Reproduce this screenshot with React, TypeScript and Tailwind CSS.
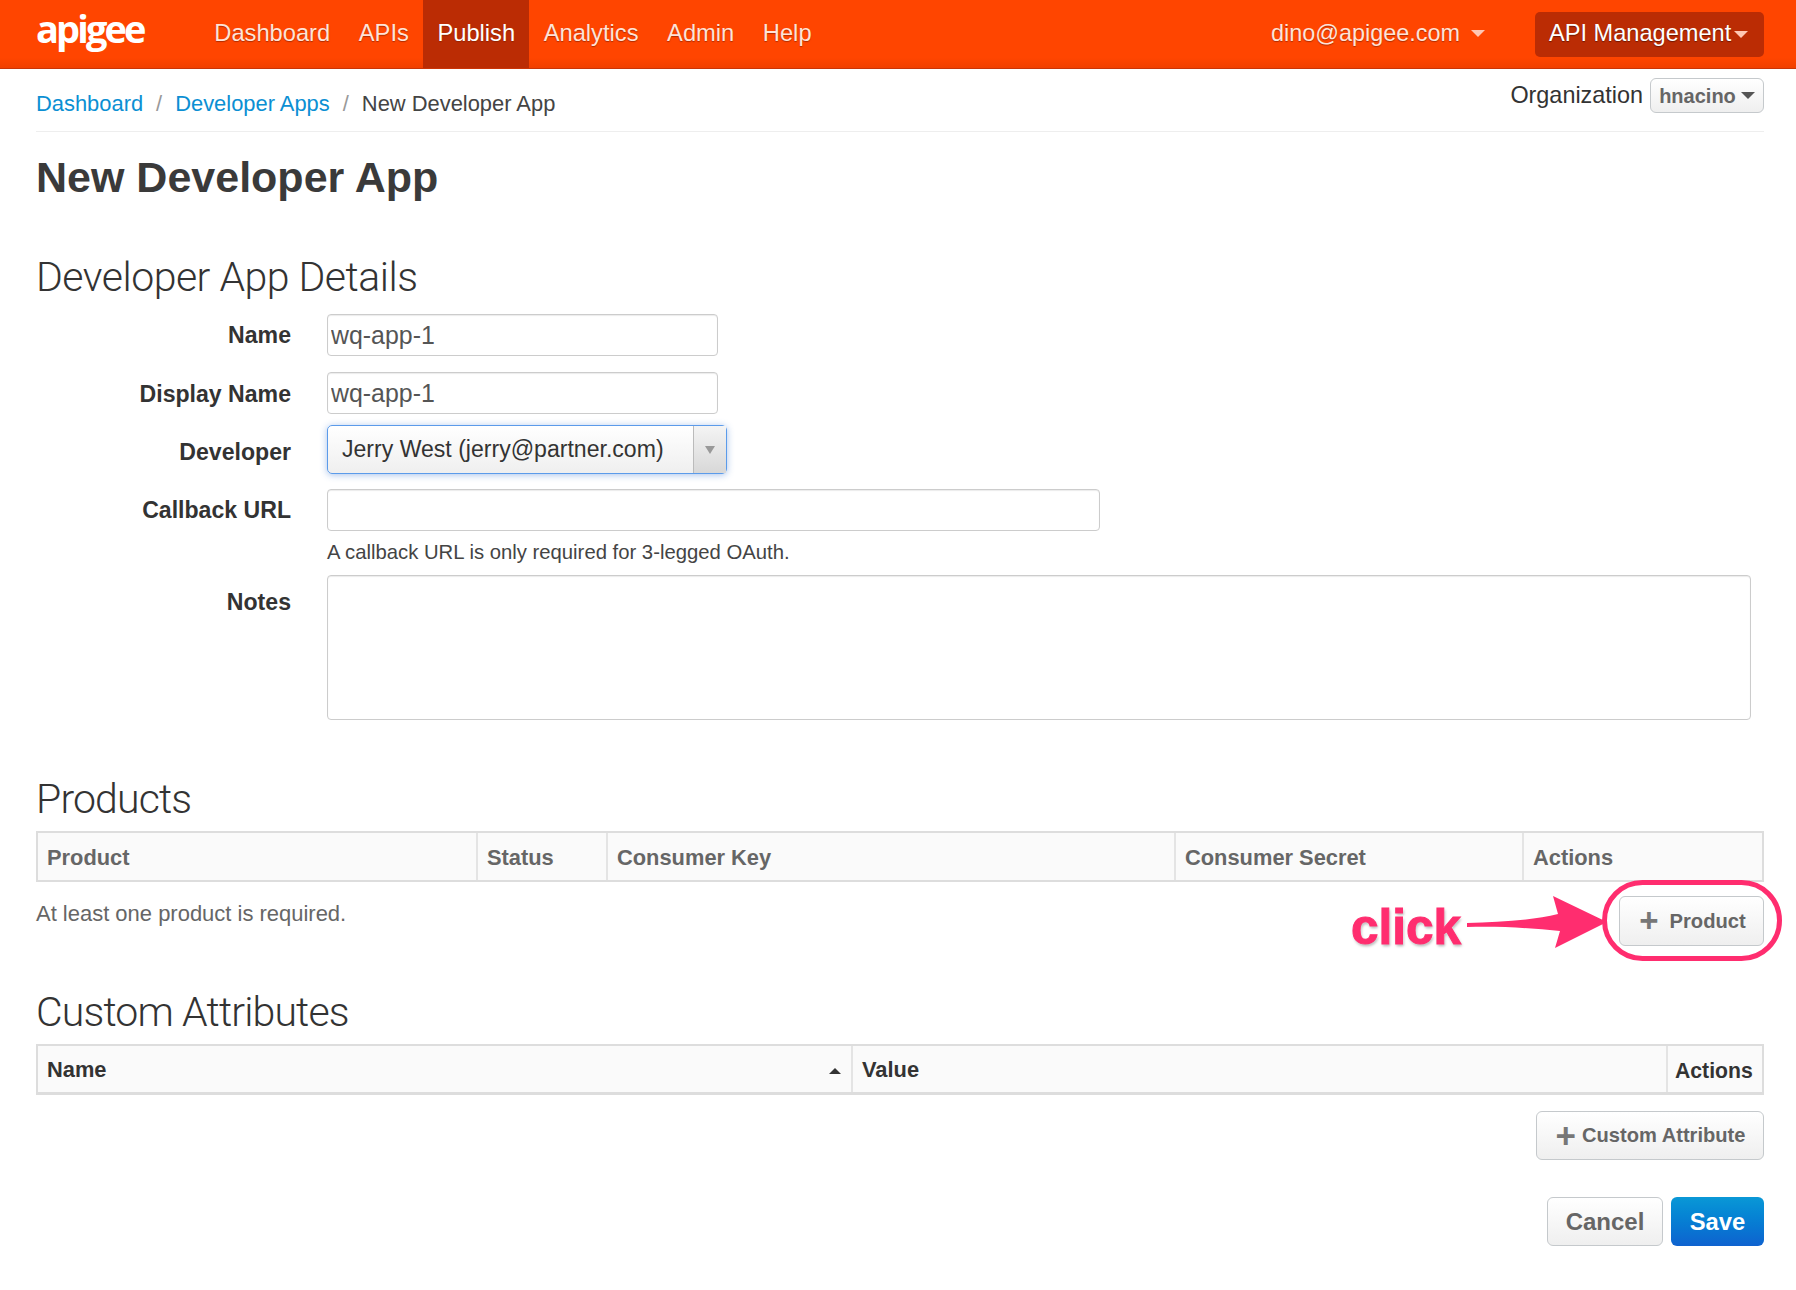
import React from "react";

function Caret({ className }: { className: string }) {
  return <span className={`inline-block h-0 w-0 border-x-[7px] border-t-[7px] border-x-transparent ${className}`} />;
}

function NavLink({ label, active }: { label: string; active?: boolean }) {
  return (
    <a className={`flex h-full items-center px-[14.3px] pb-[1px] [text-shadow:0_1px_1px_rgba(120,30,0,0.6)] ${active ? "bg-[#bb2c04] text-white" : "text-[#ffe3d8]"}`}>
      {label}
    </a>
  );
}

function Label({ children, className = "" }: { children: React.ReactNode; className?: string }) {
  return <label className={`w-[255px] pr-0 text-right text-[23.1px] font-bold leading-[28px] text-[#333] ${className}`}>{children}</label>;
}

const inputCls = "h-[42px] rounded-[4px] border border-[#ccc] bg-white px-[3px] text-[24.9px] text-[#555] shadow-[inset_0_1px_1px_rgba(0,0,0,0.08)] outline-none";
const h2Cls = "font-['Roboto'] text-[41px] font-light leading-[44px] text-[#333]";
const btnCls = "flex items-center justify-center rounded-[6px] border border-[#c5c9cc] bg-linear-to-b from-white to-[#efefef] font-bold text-[#666]";
const thCls = "flex items-center border-r-2 border-[#e4e4e4] pl-[9px] pt-[3px]";

export default function App() {
  return (
    <div className="relative min-h-[1290px] bg-white font-['Liberation_Sans',sans-serif] text-[#333]">
      <header className="flex h-[69px] items-center border-b border-[#c93508] bg-linear-to-b from-[#ff4500] from-85% to-[#f04000] pl-[36px] pr-[32px] text-[23.7px]">
        <span className="mb-[12px] w-[150px] font-['Open_Sans'] text-[38px] font-bold leading-[44px] tracking-[-2.9px] text-white">apigee</span>
        <nav className="ml-[14px] flex h-full">
          <NavLink label="Dashboard" />
          <NavLink label="APIs" />
          <NavLink label="Publish" active />
          <NavLink label="Analytics" />
          <NavLink label="Admin" />
          <NavLink label="Help" />
        </nav>
        <div className="ml-auto flex items-center text-[23.4px] text-[#ffe3d8] [text-shadow:0_1px_1px_rgba(120,30,0,0.6)]">
          dino@apigee.com
          <Caret className="ml-[11px] border-t-[#ffc7b3]" />
        </div>
        <div className="ml-[50px] flex h-[45px] w-[229px] items-center rounded-[5px] bg-[#bb2c04] pl-[14px] text-[23.6px] text-white [text-shadow:0_1px_1px_rgba(60,10,0,0.6)]">
          API Management
          <Caret className="ml-[3px] border-t-[#ffc7b3]" />
        </div>
      </header>

      <main className="pl-[36px] pr-[32px]">
        <div className="flex h-[63px] justify-between border-b border-[#eee]">
          <div className="flex items-center pt-[8px] text-[21.9px]">
            <a className="text-[#0b8fd3]">Dashboard</a>
            <span className="mx-[13px] text-[#999]">/</span>
            <a className="text-[#0b8fd3]">Developer Apps</a>
            <span className="mx-[13px] text-[#999]">/</span>
            <span className="text-[#444]">New Developer App</span>
          </div>
          <div className="flex h-[44px] items-center pt-[9px]">
            <span className="mr-[7px] text-[23.4px]">Organization</span>
            <button className={`${btnCls} h-[35px] w-[114px] gap-[5px] rounded-[5px] text-[20px]`}>
              hnacino
              <Caret className="border-t-[#555]" />
            </button>
          </div>
        </div>

        <h1 className="mt-[20px] text-[43px] font-bold leading-[50px] text-[#3a3a3a]">New Developer App</h1>

        <h2 className={`mt-[53px] tracking-[-0.5px] ${h2Cls}`}>Developer App Details</h2>

        <form className="mt-[15px] flex flex-col">
          <div className="flex items-center">
            <Label>Name</Label>
            <input className={`ml-[36px] w-[391px] ${inputCls}`} defaultValue="wq-app-1" />
          </div>
          <div className="mt-[16px] flex items-center">
            <Label className="pt-[1px]">Display Name</Label>
            <input className={`ml-[36px] w-[391px] ${inputCls}`} defaultValue="wq-app-1" />
          </div>
          <div className="mt-[11px] flex items-center">
            <Label className="pt-[5px]">Developer</Label>
            <div className="ml-[36px] flex h-[49px] w-[400px] items-center rounded-[5px] border border-[#5b9bea] bg-linear-to-b from-white to-[#efefef] shadow-[0_1px_7px_rgba(60,120,210,0.45)]">
              <span className="ml-[14px] flex-1 text-[23.07px] text-[#333]">Jerry West (jerry@partner.com)</span>
              <span className="flex h-full w-[33px] items-center justify-center border-l border-[#bbb] bg-linear-to-b from-[#f4f4f4] to-[#d8d8d8]">
                <span className="inline-block h-0 w-0 border-x-[5px] border-t-[8px] border-x-transparent border-t-[#999]" />
              </span>
            </div>
          </div>
          <div className="mt-[15px] flex items-center">
            <Label>Callback URL</Label>
            <input className={`ml-[36px] w-[773px] ${inputCls}`} />
          </div>
          <p className="ml-[291px] mt-[9px] text-[20.3px] leading-[24px] text-[#444]">
            A callback URL is only required for 3-legged OAuth.
          </p>
          <div className="mt-[11px] flex items-start">
            <Label className="pt-[13px]">Notes</Label>
            <textarea className="ml-[36px] h-[145px] w-[1424px] resize-none rounded-[4px] border border-[#ccc] bg-white shadow-[inset_0_1px_1px_rgba(0,0,0,0.08)] outline-none" />
          </div>
        </form>

        <h2 className={`mt-[57px] tracking-[-0.85px] ${h2Cls}`}>Products</h2>
        <div className="mt-[10px] grid h-[51px] grid-cols-[440px_130px_568px_348px_1fr] border-2 border-[#ddd] bg-[#fafafa] text-[21.85px] font-bold text-[#666]">
          <div className={thCls}>Product</div>
          <div className={thCls}>Status</div>
          <div className={thCls}>Consumer Key</div>
          <div className={thCls}>Consumer Secret</div>
          <div className="flex items-center pl-[9px] pt-[3px]">Actions</div>
        </div>
        <div className="mt-[14px] flex items-start justify-between">
          <p className="text-[21.97px] leading-[35px] text-[#666]">At least one product is required.</p>
          <button className={`${btnCls} h-[50px] w-[145px] gap-[11px] pl-[2px] text-[20.2px]`}>
            <span className="text-[33px] font-bold leading-[30px] text-[#777]">+</span>
            Product
          </button>
        </div>

        <h2 className={`mt-[44px] tracking-[-0.85px] ${h2Cls}`}>Custom Attributes</h2>
        <div className="mt-[10px] grid h-[51px] grid-cols-[815px_815px_1fr] border-2 border-b-[3px] border-[#ddd] bg-[#fafafa] text-[21.85px] font-bold text-[#333]">
          <div className={`${thCls} justify-between pr-[10px]`}>
            Name
            <span className="inline-block h-0 w-0 border-x-[6px] border-b-[6px] border-x-transparent border-b-[#333]" />
          </div>
          <div className={thCls}>Value</div>
          <div className="flex items-center pl-[7px] pt-[3px] text-[21.2px]">Actions</div>
        </div>
        <div className="mt-[16px] flex justify-end">
          <button className={`${btnCls} h-[49px] w-[228px] gap-[6px] pl-[1px] text-[20.1px]`}>
            <span className="text-[35px] font-bold leading-[30px] text-[#777]">+</span>
            Custom Attribute
          </button>
        </div>
        <div className="mt-[37px] flex justify-end gap-[8px]">
          <button className={`${btnCls} h-[49px] w-[116px] text-[24px]`}>Cancel</button>
          <button className="h-[49px] w-[93px] rounded-[6px] bg-linear-to-b from-[#0a98d6] to-[#0f62cf] text-[23.8px] font-bold text-white">Save</button>
        </div>
      </main>

      <span className="absolute left-[1351px] top-[897px] text-[49.5px] font-bold leading-[60px] text-[#ff2d6f] [-webkit-text-stroke:1px_#ff2d6f] [text-shadow:0_0_3px_#fff,1px_2px_3px_rgba(0,0,0,0.35)]">
        click
      </span>
      <svg className="absolute left-[1460px] top-[875px]" width="330" height="92" viewBox="1460 875 330 92" fill="none">
        <rect x="1604.5" y="882.5" width="175" height="76" rx="38" stroke="#ff2d6f" strokeWidth="5" />
        <path d="M1467 923 C1500 922 1535 920 1558 914 L1553 896 L1607 922 L1555 948 L1560 931 C1530 928 1500 926 1467 927 Z" fill="#ff2d6f" />
      </svg>
    </div>
  );
}
